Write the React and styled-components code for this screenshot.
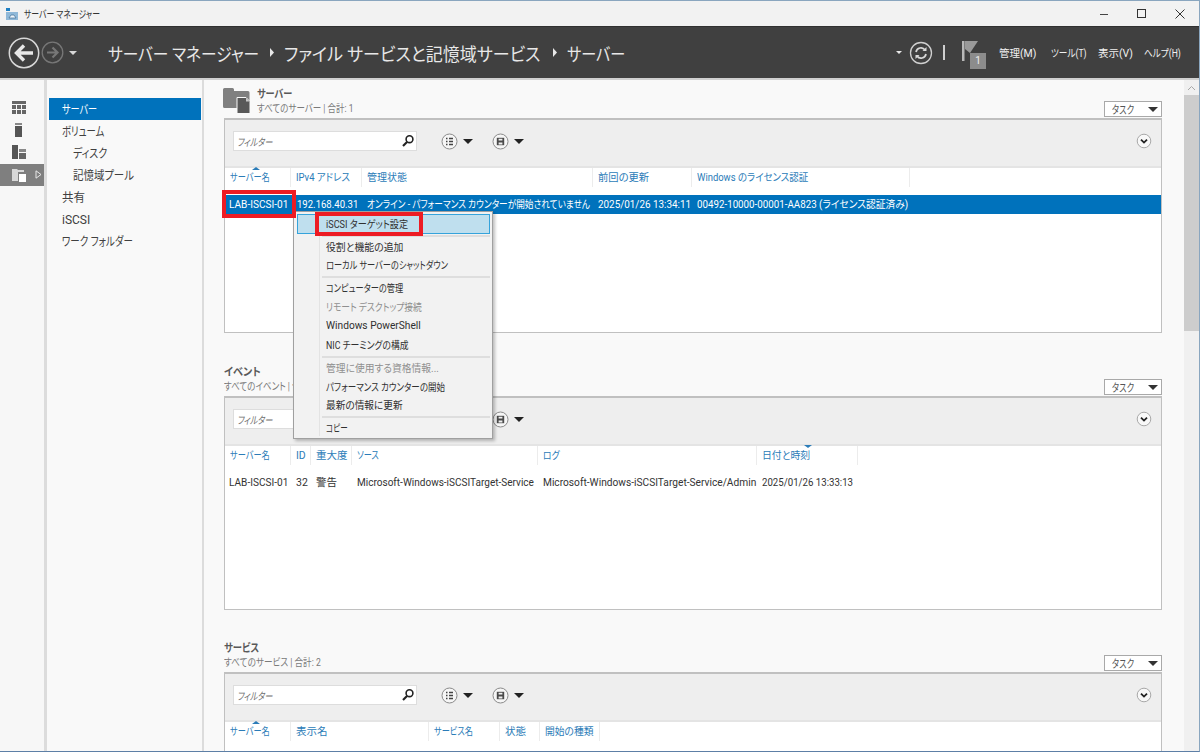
import React from 'react';
import styled, { createGlobalStyle } from 'styled-components';

const Global = createGlobalStyle`
  html, body { margin: 0; padding: 0; overflow: hidden; }
  body { font-family: Roboto, "Noto Sans CJK JP", sans-serif; font-feature-settings: "palt" 1; font-size: 11px; }
  * { box-sizing: border-box; }
`;

const Txt = styled.span`
  display: inline-block; white-space: nowrap; transform-origin: left center; transform: scaleX(${p => p.$sx ?? 1});
`;

const Win = styled.div`
  width: 1200px; height: 752px; display: flex; flex-direction: column; overflow: hidden; position: relative;
  border-top: 1px solid #8aa6bf; border-right: 1px solid #8aa6bf; border-bottom: 1px solid #5d7fa6; background: #f8f8f8;
`;
const TitleBar = styled.div`
  height: 25px; flex: none; display: flex; align-items: center; background: #f2f2f2; padding-left: 5px; color: #333;
`;
const TitleText = styled.span`margin-left: 5px; font-size: 10.5px;`;
const WinControls = styled.div`margin-left: auto; display: flex; align-items: center;`;
const WinBtn = styled.div`width: ${p => p.$w}px; height: 25px; display: flex; align-items: center; justify-content: center;`;

const Header = styled.div`
  height: 54px; flex: none; background: #404040; display: flex; align-items: center; padding-left: 8px;
  border-top: 1px solid #303030; border-bottom: 2px solid #d0d0d0; color: #f0f0f0;
`;
const Crumb = styled.div`font-size: 18px; color: #e8e8e8; margin-left: 31px; display: flex; align-items: center; white-space: nowrap;`;
const CrumbPart = styled.div`width: ${p => p.$w}px; flex: none;`;
const CrumbSep = styled.svg`width: 6px; height: 9px; margin: 0 9px 0 10px; flex: none;`;
const HeadRight = styled.div`margin-left: auto; display: flex; align-items: center;`;
const HeadMenu = styled.div`font-size: 10.5px; color: #f0f0f0; width: ${p => p.$w}px;`;
const HeadBar = styled.div`width: 2px; height: 15px; background: #cfcfcf; margin: 0 17px 0 10px;`;
const FlagWrap = styled.div`width: 26px; height: 32px; position: relative; margin-right: 11px; padding-top: 4px;`;
const FlagBadge = styled.div`
  position: absolute; left: 8px; top: 16px; width: 16px; height: 16px; background: #8c8c8c; color: #eee;
  font-size: 10px; display: flex; align-items: center; justify-content: center;
`;

const Body = styled.div`flex: 1; display: flex; min-height: 0;`;
const Rail = styled.div`
  width: 44px; flex: none; background: #f7f7f7; padding-top: 16px; display: flex; flex-direction: column;
`;
const RailItem = styled.div`
  height: 22.5px; display: flex; align-items: center; padding-left: 12px; background: ${p => p.$on ? '#7f7f7f' : 'transparent'}; gap: 9px;
`;
const Nav = styled.div`
  width: 160px; flex: none; background: #f9f9f9; padding: 18px 1px 0 2px; border-left: 3px solid #dcdcdc; border-right: 2px solid #dcdcdc;
`;
const NavItem = styled.div`
  height: 22px; line-height: 25px; padding-left: ${p => p.$sub ? 24 : 13}px; font-size: 12px; white-space: nowrap;
  color: ${p => p.$on ? '#fff' : '#404040'}; background: ${p => p.$on ? '#0072bc' : 'transparent'};
`;

const Content = styled.div`flex: 1; padding: 7px 22px 0 20px; min-width: 0; background: #f9f9f9;`;
const Section = styled.section`margin-bottom: ${p => p.$mb}px;`;
const SecHead = styled.div`height: 31px; display: flex; align-items: flex-start; position: relative;`;
const SecIcon = styled.svg`width: 28px; height: 28px; margin: 0 6px 0 -1px; flex: none;`;
const SecTitles = styled.div`flex: 1; padding-top: 1px;`;
const SecTitle = styled.div`font-size: 11px; font-weight: 700; color: #595959; line-height: 14px;`;
const SecSub = styled.div`font-size: 10.5px; color: #7a7a7a; line-height: 13px;`;
const TaskBtn = styled.div`
  width: 58px; height: 16px; margin-top: 14px; border: 1px solid #a9a9a9; background: #fff; display: flex; align-items: center; justify-content: space-between;
  padding: 0 3px 0 7px; font-size: 11px; color: #555; flex: none; overflow: hidden;
`;
const TaskLabel = styled.div`width: 36px; flex: none;`;
const Tri = styled.span`
  width: 0; height: 0; border-left: ${p => p.$s || 5}px solid transparent; border-right: ${p => p.$s || 5}px solid transparent;
  border-top: ${p => (p.$s || 5)}px solid ${p => p.$c || '#333'}; display: block; flex: none; margin-left: ${p => p.$ml || 0}px;
`;

const Panel = styled.div`
  height: ${p => p.$h}px; border: 1px solid #c0c0c0; border-top-width: 2px; background: #fff; overflow: hidden;
`;
const Toolbar = styled.div`
  height: 48px; background: #eeeeee; display: flex; align-items: center; padding: 0 9px 4px 8px; border-bottom: 2px solid #e4e4e4;
`;
const Filter = styled.div`
  width: 184px; height: 20px; background: #fff; border: 1px solid #dddddd; display: flex; align-items: center; justify-content: space-between;
  padding: 0 1px 0 3px; font-size: 10.5px; font-style: italic; color: #6e6e6e; margin-right: 24px; overflow: hidden;
`;
const ToolBtn = styled.div`display: flex; align-items: center; gap: 5px; margin-right: 19px;`;
const Expand = styled.svg`width: 16px; height: 16px; margin-left: auto;`;
const HeadRow = styled.div`height: 19px; display: flex; background: #fff; margin-bottom: 8px;`;
const HeadCell = styled.div`
  width: ${p => p.$w}px; flex: none; padding-left: 5px; font-size: 10.5px; color: #2b7cb8; border-right: 1px solid #ececec; white-space: nowrap;
  line-height: 20px; position: relative;
`;
const SortMark = styled.span`
  position: absolute; left: ${p => p.$l}px; top: -1px; width: 0; height: 0; border-left: 4px solid transparent; border-right: 4px solid transparent;
  ${p => p.$down ? 'border-top: 3px solid #2b7cb8;' : 'border-bottom: 3px solid #2b7cb8;'}
`;
const DataRow = styled.div`height: 19px; display: flex; background: ${p => p.$sel ? '#0072bc' : '#fff'}; color: ${p => p.$sel ? '#fff' : '#333'};`;
const DataCell = styled.div`width: ${p => p.$w}px; flex: none; padding-left: ${p => p.$pl ?? 5}px; font-size: 10.5px; white-space: nowrap; line-height: 19px;`;

const Scroll = styled.div`width: 15px; flex: none; background: #f0f0f0; display: flex; flex-direction: column;`;
const ScrollUp = styled.div`height: 15px; display: flex; align-items: center; justify-content: center;`;
const ScrollThumb = styled.div`height: 236px; background: #cdcdcd;`;

const Menu = styled.div`
  position: absolute; left: 293px; top: 210px; width: 200px; height: 228px; background: #f2f2f2; border: 1px solid #a0a0a0;
  box-shadow: 2px 2px 3px rgba(0,0,0,0.25); padding: 2px 2px 0 3px; font-size: 10.5px; color: #333;
  &::before { content: ""; position: absolute; left: 25px; top: 2px; bottom: 2px; width: 1px; background: #e3e3e3; }
`;
const MenuItem = styled.div`
  height: 18.8px; display: flex; align-items: center; padding: 0 0 2px 29px; position: relative; white-space: nowrap;
  color: ${p => p.$off ? '#8f8f8f' : '#303030'};
  ${p => p.$hot && 'background: #bfdfee; border: 1px solid #35a3db; padding: 0 0 1px 28px; height: 19.5px;'}
`;
const MenuSep = styled.div`height: 2px; margin: 1.2px 0 1px 25px; background: #dedede; position: relative;`;
const RedBox = styled.div`
  position: absolute; left: ${p => p.$x}px; top: ${p => p.$y}px; width: ${p => p.$w}px; height: ${p => p.$h}px; border: 4px solid #ed1c24; pointer-events: none;
`;

const col1 = [66, 71, 231, 99, 218];
const col2 = [66, 20, 41, 186, 219, 101];
const col3 = [66, 138, 71, 40, 60];

const Search = () => (
  <svg width="14" height="14" viewBox="0 0 14 14" fill="none" stroke="#222">
    <circle cx="8.5" cy="5.2" r="3.4" strokeWidth="1.6" /><path d="M6 8 L2 12" strokeWidth="2.2" />
  </svg>
);
const ListBtn = () => (
  <svg width="17" height="17" viewBox="0 0 17 17" fill="none" stroke="#8a8a8a">
    <circle cx="8.5" cy="8.5" r="7.5" fill="#f6f6f6" />
    <path d="M5 5.5h1.5M5 8.5h1.5M5 11.5h1.5M8 5.5h4M8 8.5h4M8 11.5h4" strokeWidth="1.6" stroke="#444" />
  </svg>
);
const SaveBtn = () => (
  <svg width="17" height="17" viewBox="0 0 17 17" fill="none" stroke="#8a8a8a">
    <circle cx="8.5" cy="8.5" r="7.5" fill="#f6f6f6" />
    <path d="M4.8 4.8h7.4v7.4H4.8z" fill="#4a4a4a" stroke="none" />
    <path d="M6.6 5.8h3.8v1.8H6.6zM6.6 9.6h3.8v2H6.6z" fill="#f0f0f0" stroke="none" />
  </svg>
);

const Tools = () => (
  <Toolbar>
    <Filter><Txt $sx={0.77}>フィルター</Txt><Search /></Filter>
    <ToolBtn><ListBtn /><Tri $s={5} $c="#222" /></ToolBtn>
    <ToolBtn><SaveBtn /><Tri $s={5} $c="#222" /></ToolBtn>
    <Expand viewBox="0 0 16 16" fill="none">
      <circle cx="8" cy="8" r="6.8" fill="#f8f8f8" stroke="#a8a8a8" />
      <path d="M5 6.6 L8 9.6 L11 6.6" stroke="#222" strokeWidth="1.8" />
    </Expand>
  </Toolbar>
);

const Head = ({ cols, names, sort, down }) => (
  <HeadRow>
    {names.map(([n, sx], i) => (
      <HeadCell key={n} $w={cols[i]}>
        <Txt $sx={sx}>{n}</Txt>{sort && sort[0] === i && <SortMark $l={sort[1]} $down={down} />}
      </HeadCell>
    ))}
  </HeadRow>
);

const SecHeader = ({ title, titleSx, sub, subSx, icon }) => (
  <SecHead>
    {icon && (
      <SecIcon viewBox="0 0 28 28">
        <path d="M0 2.5q0-1.5 1.5-1.5h8q1.5 0 1.5 1.5v1.5h14q1.5 0 1.5 1.5v15.5H1.5Q0 21 0 19.5z" fill="#808080" />
        <path d="M14 10.5h9l4 4v12H14z" fill="#595959" stroke="#f9f9f9" strokeWidth="1" />
        <path d="M23 11l3.5 3.5H23z" fill="#c8c8c8" />
      </SecIcon>
    )}
    <SecTitles>
      <SecTitle><Txt $sx={titleSx}>{title}</Txt></SecTitle>
      <SecSub><Txt $sx={subSx}>{sub}</Txt></SecSub>
    </SecTitles>
    <TaskBtn><TaskLabel><Txt $sx={0.75}>タスク</Txt></TaskLabel><Tri $s={5} /></TaskBtn>
  </SecHead>
);

const Arrow = () => <CrumbSep viewBox="0 0 6 9"><path d="M1 0l4 4.5L1 9z" fill="#e8e8e8" /></CrumbSep>;

export default function App() {
  return (
    <Win>
      <Global />
      <TitleBar>
        <svg width="14" height="14" viewBox="0 0 14 14">
          <path d="M1 1h4v3H1z" fill="#1d7fc4" /><path d="M1 5h12v8H1z" fill="#8fb8d8" />
          <path d="M4 11l2-3h3l2 3z" fill="#eef5fa" stroke="#3f6f96" strokeWidth=".7" />
        </svg>
        <TitleText><Txt $sx={0.75}>サーバー マネージャー</Txt></TitleText>
        <WinControls>
          <WinBtn $w={39}><svg width="10" height="10"><path d="M1 5.5h8" stroke="#444" /></svg></WinBtn>
          <WinBtn $w={38}><svg width="10" height="10"><rect x=".5" y=".5" width="8" height="8" fill="none" stroke="#333" /></svg></WinBtn>
          <WinBtn $w={38}><svg width="10" height="10"><path d="M.5.5l9 9M9.5.5l-9 9" stroke="#333" /></svg></WinBtn>
        </WinControls>
      </TitleBar>

      <Header>
        <svg width="32" height="32" viewBox="0 0 32 32" fill="none">
          <circle cx="16" cy="16" r="14.7" stroke="#d8d8d8" strokeWidth="1.5" />
          <path d="M25 16H9M16 8.5L8.5 16l7.5 7.5" stroke="#e8e8e8" strokeWidth="3.4" />
        </svg>
        <svg width="23" height="23" viewBox="0 0 23 23" fill="none" style={{ marginLeft: 1 }}>
          <circle cx="11.5" cy="11.5" r="10.3" stroke="#777" strokeWidth="1.3" />
          <path d="M17 11.5H6M11.5 6.5l5 5-5 5" stroke="#777" strokeWidth="2.2" />
        </svg>
        <Tri $s={4} $c="#d8d8d8" $ml={5} />
        <Crumb>
          <CrumbPart $w={151}><Txt $sx={0.87}>サーバー マネージャー</Txt></CrumbPart>
          <Arrow />
          <CrumbPart $w={258}><Txt $sx={0.945}>ファイル サービスと記憶域サービス</Txt></CrumbPart>
          <Arrow />
          <CrumbPart $w={58}><Txt $sx={0.84}>サーバー</Txt></CrumbPart>
        </Crumb>
        <HeadRight>
          <Tri $s={3} $c="#e8e8e8" />
          <svg width="24" height="24" viewBox="0 0 24 24" fill="none" style={{ marginLeft: 7 }}>
            <circle cx="12" cy="12" r="10.5" stroke="#d0d0d0" strokeWidth="1.3" />
            <path d="M7 11a5 5 0 0 1 9-2M17 13a5 5 0 0 1-9 2" stroke="#d8d8d8" strokeWidth="1.7" />
            <path d="M17.5 6v4h-4zM6.5 18v-4h4z" fill="#d8d8d8" />
          </svg>
          <HeadBar />
          <FlagWrap>
            <svg width="16" height="21" viewBox="0 0 16 21">
              <path d="M0 0h2.5v20H0z" fill="#b8b8b8" /><path d="M3 0h13L8 12 3 8z" fill="#9a9a9a" />
            </svg>
            <FlagBadge>1</FlagBadge>
          </FlagWrap>
          <HeadMenu $w={52}>管理(M)</HeadMenu>
          <HeadMenu $w={47}><Txt $sx={0.82}>ツール(T)</Txt></HeadMenu>
          <HeadMenu $w={46}>表示(V)</HeadMenu>
          <HeadMenu $w={55}><Txt $sx={0.82}>ヘルプ(H)</Txt></HeadMenu>
        </HeadRight>
      </Header>

      <Body>
        <Rail>
          <RailItem>
            <svg width="14" height="13" viewBox="0 0 14 13"><path d="M0 0h14v3H0zM0 4h4v4H0zM5 4h4v4H5zM10 4h4v4h-4zM0 9h4v4H0zM5 9h4v4H5zM10 9h4v4h-4z" fill="#666" /></svg>
          </RailItem>
          <RailItem>
            <svg width="14" height="14" viewBox="0 0 14 14"><path d="M3 0h7v2H3z" fill="#888" /><path d="M3 3h7v11H3z" fill="#555" /></svg>
          </RailItem>
          <RailItem>
            <svg width="14" height="14" viewBox="0 0 14 14"><path d="M0 0h6v14H0z" fill="#555" /><path d="M7 4h7v3H7z" fill="#888" /><path d="M7 8h7v6H7z" fill="#666" /></svg>
          </RailItem>
          <RailItem $on>
            <svg width="14" height="14" viewBox="0 0 14 14"><path d="M0 1h5l1 1h6v2H6v9H0z" fill="#d8d8d8" /><path d="M7 6h7v8H7z" fill="#fff" /></svg>
            <svg width="7" height="9" viewBox="0 0 7 9" fill="none"><path d="M1 .8L6 4.5 1 8.2z" stroke="#e8e8e8" /></svg>
          </RailItem>
        </Rail>
        <Nav>
          <NavItem $on><Txt $sx={0.76}>サーバー</Txt></NavItem>
          <NavItem><Txt $sx={0.78}>ボリューム</Txt></NavItem>
          <NavItem $sub><Txt $sx={0.83}>ディスク</Txt></NavItem>
          <NavItem $sub><Txt $sx={0.87}>記憶域プール</Txt></NavItem>
          <NavItem><Txt $sx={0.96}>共有</Txt></NavItem>
          <NavItem>iSCSI</NavItem>
          <NavItem><Txt $sx={0.79}>ワーク フォルダー</Txt></NavItem>
        </Nav>
        <Content>
          <Section $mb={32}>
            <SecHeader icon title="サーバー" titleSx={0.83} sub="すべてのサーバー | 合計: 1" subSx={0.81} />
            <Panel $h={215}>
              <Tools />
              <Head cols={col1} sort={[0, 27]} names={[['サーバー名', 0.78], ['IPv4 アドレス', 0.9], ['管理状態', 0.95], ['前回の更新', 0.98], ['Windows のライセンス認証', 0.9]]} />
              <DataRow $sel>
                <DataCell $w={col1[0]} $pl={4}><Txt $sx={0.96}>LAB-ISCSI-01</Txt></DataCell>
                <DataCell $w={col1[1]} $pl={6}><Txt $sx={0.91}>192.168.40.31</Txt></DataCell>
                <DataCell $w={col1[2]}><Txt $sx={0.825}>オンライン - パフォーマンス カウンターが開始されていません</Txt></DataCell>
                <DataCell $w={col1[3]}><Txt $sx={0.94}>2025/01/26 13:34:11</Txt></DataCell>
                <DataCell $w={col1[4] + 200}><Txt $sx={0.93}>00492-10000-00001-AA823 (ライセンス認証済み)</Txt></DataCell>
              </DataRow>
            </Panel>
          </Section>
          <Section $mb={31}>
            <SecHeader title="イベント" titleSx={0.92} sub="すべてのイベント | 合計: 1" subSx={0.81} />
            <Panel $h={214}>
              <Tools />
              <Head cols={col2} sort={[5, 47]} down names={[['サーバー名', 0.78], ['ID', 1], ['重大度', 1], ['ソース', 0.78], ['ログ', 0.84], ['日付と時刻', 0.94]]} />
              <DataRow>
                <DataCell $w={col2[0]} $pl={4}><Txt $sx={0.96}>LAB-ISCSI-01</Txt></DataCell>
                <DataCell $w={col2[1]}>32</DataCell>
                <DataCell $w={col2[2]}>警告</DataCell>
                <DataCell $w={col2[3]}><Txt $sx={0.955}>Microsoft-Windows-iSCSITarget-Service</Txt></DataCell>
                <DataCell $w={col2[4]}><Txt $sx={0.97}>Microsoft-Windows-iSCSITarget-Service/Admin</Txt></DataCell>
                <DataCell $w={col2[5]}><Txt $sx={0.92}>2025/01/26 13:33:13</Txt></DataCell>
              </DataRow>
            </Panel>
          </Section>
          <Section $mb={0}>
            <SecHeader title="サービス" titleSx={0.85} sub="すべてのサービス | 合計: 2" subSx={0.82} />
            <Panel $h={100}>
              <Tools />
              <Head cols={col3} sort={[0, 27]} names={[['サーバー名', 0.78], ['表示名', 1], ['サービス名', 0.78], ['状態', 1], ['開始の種類', 0.93]]} />
            </Panel>
          </Section>
        </Content>
        <Scroll>
          <ScrollUp><svg width="9" height="6"><path d="M1 5l3.5-3.5L8 5" fill="none" stroke="#a8a8a8" /></svg></ScrollUp>
          <ScrollThumb />
        </Scroll>
      </Body>

      <Menu>
        <MenuItem $hot><Txt $sx={0.87}>iSCSI ターゲット設定</Txt></MenuItem>
        <MenuSep />
        <MenuItem><Txt $sx={0.94}>役割と機能の追加</Txt></MenuItem>
        <MenuItem><Txt $sx={0.78}>ローカル サーバーのシャットダウン</Txt></MenuItem>
        <MenuSep />
        <MenuItem><Txt $sx={0.78}>コンピューターの管理</Txt></MenuItem>
        <MenuItem $off><Txt $sx={0.83}>リモート デスクトップ接続</Txt></MenuItem>
        <MenuItem><Txt $sx={0.97}>Windows PowerShell</Txt></MenuItem>
        <MenuItem><Txt $sx={0.84}>NIC チーミングの構成</Txt></MenuItem>
        <MenuSep />
        <MenuItem $off><Txt $sx={0.93}>管理に使用する資格情報...</Txt></MenuItem>
        <MenuItem><Txt $sx={0.81}>パフォーマンス カウンターの開始</Txt></MenuItem>
        <MenuItem><Txt $sx={0.92}>最新の情報に更新</Txt></MenuItem>
        <MenuSep />
        <MenuItem><Txt $sx={0.72}>コピー</Txt></MenuItem>
      </Menu>
      <RedBox $x={222} $y={189} $w={74} $h={28} />
      <RedBox $x={315} $y={211} $w={108} $h={24} />
    </Win>
  );
}
